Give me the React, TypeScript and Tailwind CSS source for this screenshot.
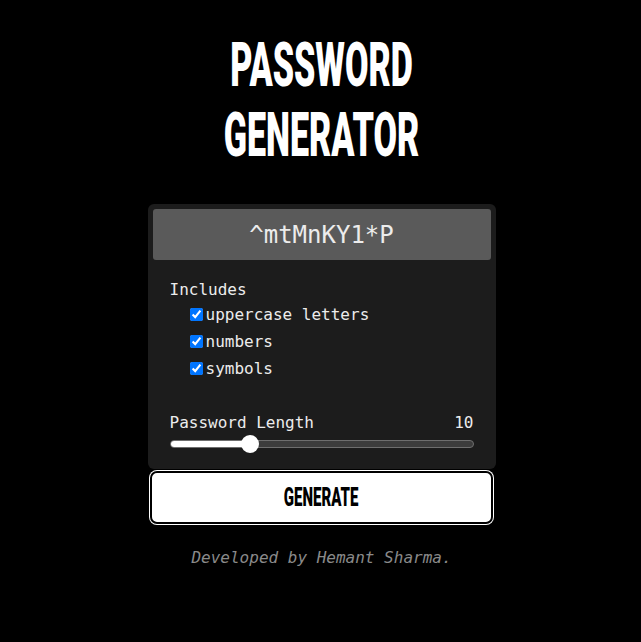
import React from "react";

const mono = "font-['DejaVu_Sans_Mono','Liberation_Mono',monospace]";
const display = "font-['Roboto','Liberation_Sans',sans-serif]";

const options = ["uppercase letters", "numbers", "symbols"];

const App = () => {
  const length = 10;
  const pct = 26.5;
  return (
    <div className="min-h-screen w-full bg-black pt-[30px] pl-[2px] text-white">
      <h1
        className={`${display} scale-x-[0.55] text-center text-[62px] leading-[70px] font-black uppercase`}
      >
        Password
        <br />
        Generator
      </h1>

      <div className="mx-auto mt-[34px] w-[348px]">
        <div className="rounded-[6px] bg-[#1c1c1c] p-[5px] pb-[16px]">
          <div
            className={`${mono} flex h-[51px] items-center justify-center rounded-[3px] bg-[#5a5a5a] text-[24px] text-[#ececec]`}
          >
            ^mtMnKY1*P
          </div>

          <div className={`${mono} px-[17px] text-[16px] text-[#ececec]`}>
            <p className="mt-[18px] leading-[23px]">Includes</p>
            {options.map((opt) => (
              <label key={opt} className="flex h-[27px] items-center">
                <input
                  type="checkbox"
                  checked
                  readOnly
                  className="m-0 ml-[20px] mr-[3px] h-[13px] w-[13px]"
                />
                <span>{opt}</span>
              </label>
            ))}

            <div className="mt-[29px] flex justify-between leading-[24px]">
              <span>Password Length</span>
              <span>{length}</span>
            </div>
            <div className="relative flex h-[18px] items-center">
              <div className="h-[8px] w-full overflow-hidden rounded-full border border-[#6e6e6e] bg-[#3c3c3c]">
                <div className="h-full bg-white" style={{ width: `${pct}%` }} />
              </div>
              <div
                className="absolute top-0 h-[18px] w-[18px] -translate-x-1/2 rounded-full bg-white"
                style={{ left: `${pct}%` }}
              />
            </div>
          </div>
        </div>

        <button className="mx-auto mt-[2px] flex h-[53px] w-[343px] items-center justify-center rounded-[7px] border-2 border-black bg-white shadow-[0_0_0_1px_white]">
          <span
            className={`${display} scale-x-[0.6] text-[25px] font-black uppercase text-black`}
          >
            Generate
          </span>
        </button>

        <p
          className={`${mono} mt-[22px] text-center text-[16px] leading-[24px] italic text-[#8a8a8a]`}
        >
          Developed by Hemant Sharma.
        </p>
      </div>
    </div>
  );
};

export default App;
